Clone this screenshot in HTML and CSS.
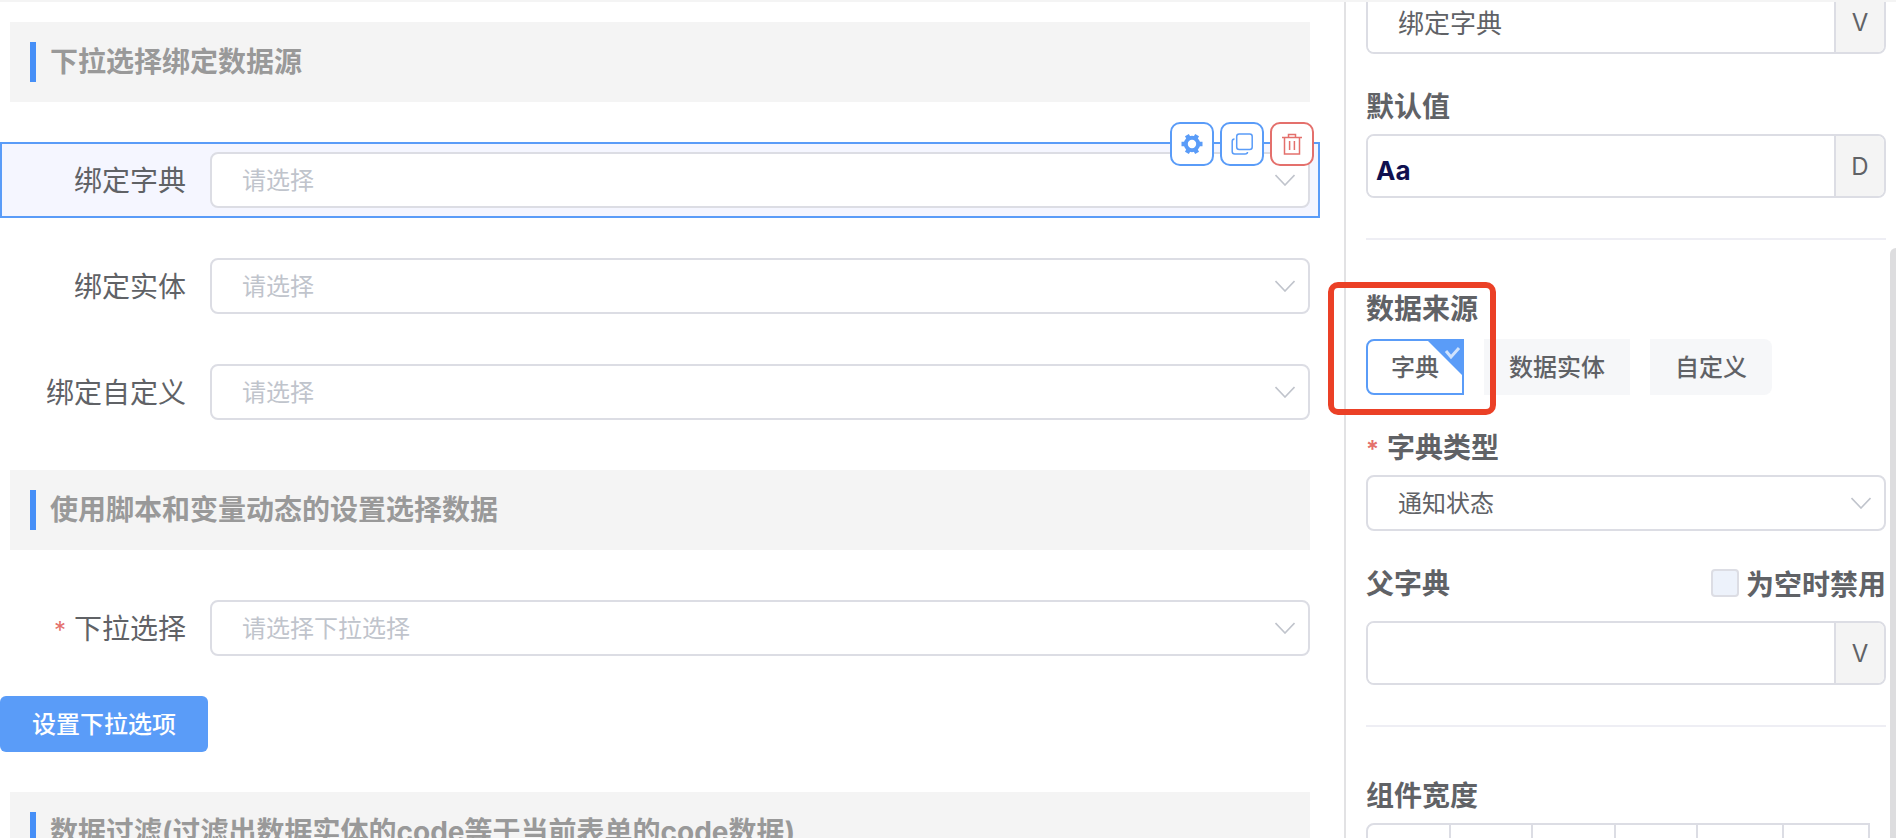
FILE: index.html
```html
<!DOCTYPE html>
<html lang="zh-CN">
<head>
  <meta charset="UTF-8">
  <title>表单设计器</title>
  <link rel="stylesheet" href="styles.css">
</head>
<body>

  <!-- 画布 -->
  <main class="canvas">
    <h2 class="section-title">下拉选择绑定数据源</h2>

    <div class="form-row active">
      <label class="row-label" for="dict">绑定字典</label>
      <div class="select-box">
        <select id="dict" class="empty"><option>请选择</option></select>
        <svg class="caret" viewBox="0 0 20 12"><path d="M.5 1l9.500 10 9.500-10"/></svg>
      </div>
      <div class="row-tools">
        <button class="tool-btn" aria-label="设置">
          <svg viewBox="0 0 24 24"><path class="gear-teeth" d="M1.500 12h21M6.900 3.200l10.200 17.600M17.100 3.200L6.900 20.800"/><circle class="gear" cx="12" cy="12" r="6.200"/></svg>
        </button>
        <button class="tool-btn" aria-label="复制">
          <svg viewBox="0 0 24 24"><rect x="6.700" y="2" width="15.500" height="15.500" rx="2.500"/><path d="M4.500 7Q2.200 7 2.200 9.500V19.500q0 2.500 2.500 2.500h10.300Q17.500 22 17.500 20"/></svg>
        </button>
        <button class="tool-btn danger" aria-label="删除">
          <svg viewBox="0 0 24 24"><path d="M2 5.500h20M4.500 5.500v16.500h15v-16.500M8.500 5.500v-3h7v3M9.600 9v9M14.400 9v9"/></svg>
        </button>
      </div>
    </div>

    <div class="form-row">
      <label class="row-label" for="entity">绑定实体</label>
      <div class="select-box">
        <select id="entity" class="empty"><option>请选择</option></select>
        <svg class="caret" viewBox="0 0 20 12"><path d="M.5 1l9.500 10 9.500-10"/></svg>
      </div>
    </div>

    <div class="form-row">
      <label class="row-label" for="custom">绑定自定义</label>
      <div class="select-box">
        <select id="custom" class="empty"><option>请选择</option></select>
        <svg class="caret" viewBox="0 0 20 12"><path d="M.5 1l9.500 10 9.500-10"/></svg>
      </div>
    </div>

    <h2 class="section-title">使用脚本和变量动态的设置选择数据</h2>

    <div class="form-row">
      <label class="row-label" for="choice"><span class="required">*</span>下拉选择</label>
      <div class="select-box">
        <select id="choice" class="empty"><option>请选择下拉选择</option></select>
        <svg class="caret" viewBox="0 0 20 12"><path d="M.5 1l9.500 10 9.500-10"/></svg>
      </div>
    </div>

    <button class="primary-btn">设置下拉选项</button>

    <h2 class="section-title">数据过滤(过滤出数据实体的code等于当前表单的code数据)</h2>
  </main>

  <!-- 属性面板 -->
  <aside class="panel">
    <div class="input-group first">
      <input type="text" class="title-input" value="绑定字典" aria-label="标题">
      <button class="addon">V</button>
    </div>

    <label class="panel-label" for="defaultValue">默认值</label>
    <div class="input-group">
      <input type="text" id="defaultValue" class="code-input" value="Aa">
      <button class="addon">D</button>
    </div>

    <hr>

    <div class="panel-label">数据来源</div>
    <div class="source-tabs">
      <button class="source-tab selected">字典
        <svg class="tick" viewBox="0 0 38 38"><path class="corner" d="M0 0h38v38z"/><path class="check" d="M20 12l5 6 8-9"/></svg>
      </button>
      <button class="source-tab">数据实体</button>
      <button class="source-tab">自定义</button>
      <div class="mark"></div>
    </div>

    <label class="panel-label" for="dictType"><span class="required">*</span>字典类型</label>
    <div class="select-box">
      <select id="dictType"><option>通知状态</option></select>
      <svg class="caret" viewBox="0 0 20 12"><path d="M.5 1l9.500 10 9.500-10"/></svg>
    </div>

    <div class="parent-head">
      <label class="panel-label" for="parentDict">父字典</label>
      <label class="check-label"><input type="checkbox">为空时禁用</label>
    </div>
    <div class="input-group">
      <input type="text" id="parentDict">
      <button class="addon">V</button>
    </div>

    <hr>

    <div class="panel-label">组件宽度</div>
    <div class="width-group">
      <button aria-label="1"></button>
      <button aria-label="2"></button>
      <button aria-label="3"></button>
      <button aria-label="4"></button>
      <button aria-label="5"></button>
      <button aria-label="6"></button>
    </div>
    <div class="scrollbar"></div>
  </aside>

</body>
</html>
```
FILE: styles.css
```css
:root {
  --primary: #5a9cf8;
  --danger: #e4706c;
  --border: #dcdde4;
  --text: #606266;
  --placeholder: #c0c4cc;
  --fill: #f4f4f4;
}

* {
  box-sizing: border-box;
}

body {
  margin: 0;
  height: 100vh;
  display: flex;
  overflow: hidden;
  border-top: 2px solid var(--fill);
  background: #fff;
  color: var(--text);
  font-family: Inter, "Noto Sans CJK SC", sans-serif;
  font-size: 24px;
}

button, input, select {
  font: inherit;
  color: inherit;
  margin: 0;
}

button {
  cursor: pointer;
}

.canvas {
  flex: 1;
  min-width: 0;
  padding-right: 24px;
}

.section-title {
  display: flex;
  align-items: center;
  height: 80px;
  margin: 40px 10px;
  padding-left: 20px;
  background: var(--fill);
  color: #999;
  font-size: 28px;
  font-weight: 700;
  line-height: 40px;
}

.section-title:first-child {
  margin-top: 20px;
}

.section-title::before {
  content: "";
  width: 6px;
  height: 40px;
  margin-right: 14px;
  background: #468ff7;
}

.form-row {
  position: relative;
  display: flex;
  align-items: center;
  height: 76px;
  margin-bottom: 30px;
  padding-right: 8px;
  border: 2px solid transparent;
}

.form-row.active {
  background: #f5f6ff;
  border-color: var(--primary);
}

.row-label {
  width: 208px;
  padding: 0 24px 2px 0;
  text-align: right;
  font-size: 28px;
}

.required {
  margin-right: 8px;
  color: var(--danger);
  font-size: 24px;
  line-height: 1;
}

.select-box {
  position: relative;
  flex: 1;
}

select {
  display: block;
  width: 100%;
  height: 56px;
  padding: 0 60px 0 30px;
  border: 2px solid var(--border);
  border-radius: 8px;
  background: #fff;
  appearance: none;
}

select.empty {
  color: var(--placeholder);
}

.caret {
  position: absolute;
  right: 15px;
  top: 22px;
  width: 20px;
  height: 12px;
  pointer-events: none;
}

.caret path {
  fill: none;
  stroke: var(--placeholder);
  stroke-width: 1.6;
}

/* 选中行右上角的操作按钮 */
.row-tools {
  position: absolute;
  top: -22px;
  right: 4px;
  display: flex;
  gap: 6px;
}

.tool-btn {
  display: flex;
  align-items: center;
  justify-content: center;
  width: 44px;
  height: 44px;
  padding: 0;
  border: 2px solid var(--primary);
  border-radius: 10px;
  background: #fff;
  color: var(--primary);
}

.tool-btn.danger {
  border-color: var(--danger);
  color: var(--danger);
}

.tool-btn svg {
  width: 24px;
  height: 24px;
  fill: none;
  stroke: currentColor;
  stroke-width: 1.5;
}

.tool-btn .gear-teeth {
  stroke-width: 4.5;
}

.tool-btn .gear {
  fill: #fff;
  stroke-width: 4;
}

.primary-btn {
  display: block;
  height: 56px;
  padding: 0 32px 3px;
  border: none;
  border-radius: 6px;
  background: var(--primary);
  color: #fff;
  font-weight: 500;
}

.panel {
  position: relative;
  width: 552px;
  overflow-x: visible;
  overflow-y: clip;
  padding: 0 10px 0 20px;
  border-left: 2px solid #e2e2e4;
}

.panel-label {
  display: block;
  line-height: 42px;
  margin-bottom: 6px;
  font-size: 28px;
  font-weight: 600;
}

.input-group {
  display: flex;
  height: 64px;
  margin-bottom: 32px;
  border: 2px solid var(--border);
  border-radius: 8px;
  overflow: hidden;
}

.input-group.first {
  margin-top: -12px;
}

.input-group input {
  flex: 1;
  min-width: 0;
  padding: 0 30px;
  border: none;
  outline: none;
}

.input-group .title-input {
  padding-bottom: 2px;
  font-size: 26px;
}

.input-group .code-input {
  padding: 8px 8px 0;
  color: #10104f;
  font-size: 26px;
  font-weight: 700;
}

.addon {
  width: 50px;
  padding: 0;
  border: none;
  border-left: 2px solid var(--border);
  background: var(--fill);
}

hr {
  margin: 40px 0 48px;
  border: none;
  border-top: 2px solid #eeeef4;
}

.source-tabs {
  position: relative;
  display: flex;
  gap: 20px;
  margin: 9px 0 32px;
}

.source-tab {
  position: relative;
  height: 56px;
  padding: 0 25px 3px;
  border: none;
  background: #f6f7f9;
  font-weight: 500;
}

.source-tab:nth-child(3) {
  border-radius: 0 8px 8px 0;
}

.source-tab.selected {
  padding: 0 23px 3px;
  border: 2px solid var(--primary);
  border-radius: 8px 0 0 8px;
  background: #fff;
}

.tick {
  position: absolute;
  top: -2px;
  right: -2px;
  width: 38px;
  height: 38px;
}

.tick .corner {
  fill: var(--primary);
}

.tick .check {
  fill: none;
  stroke: #cfe2fd;
  stroke-width: 3;
}

/* 红色标注框 */
.mark {
  position: absolute;
  top: -57px;
  left: -38px;
  width: 168px;
  height: 133px;
  border: 6px solid #eb4026;
  border-radius: 10px;
  pointer-events: none;
}

.parent-head {
  display: flex;
  justify-content: space-between;
  margin-top: 32px;
  margin-bottom: 10px;
}

.check-label {
  display: flex;
  align-items: center;
  gap: 7px;
  height: 40px;
  font-size: 28px;
  font-weight: 600;
}

.check-label input {
  appearance: none;
  width: 28px;
  height: 28px;
  border: 2px solid var(--border);
  border-radius: 4px;
  background: #edf2fb;
}

.width-group {
  display: flex;
  height: 56px;
  margin-right: 16px;
  border: 2px solid var(--border);
  border-radius: 8px 0 0 8px;
}

.width-group button {
  flex: 20;
  border: none;
  background: #fff;
}

.width-group button:nth-child(n+5) {
  flex: 21;
}

.width-group button:first-child {
  border-radius: 8px 0 0 8px;
}

.width-group button + button {
  border-left: 2px solid var(--border);
}

.scrollbar {
  position: absolute;
  top: 246px;
  right: 0;
  bottom: 0;
  width: 6px;
  border-radius: 6px 0 0 0;
  background: #dddddf;
}
```
